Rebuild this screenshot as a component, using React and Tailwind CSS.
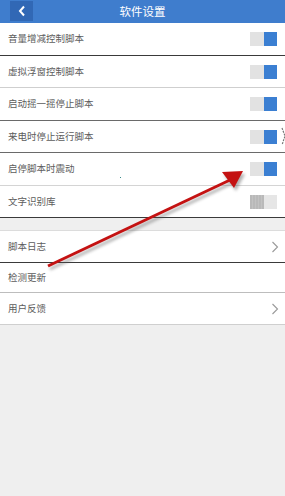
import React from "react";

const Toggle = ({ on }) =>
  on ? (
    <div className="flex h-[14px] w-[27px]">
      <div className="h-full w-[14px] bg-[#e2e2e2]" />
      <div className="h-full w-[13px] bg-[#3b7fd2]" />
    </div>
  ) : (
    <div className="flex h-[14px] w-[27px]">
      <div className="h-full w-[14px] bg-[repeating-linear-gradient(90deg,#b9b9b9_0px,#b9b9b9_2px,#c2c2c2_2px,#c2c2c2_3px)]" />
      <div className="h-full w-[13px] bg-[#e6e6e6]" />
    </div>
  );

const Chevron = () => (
  <svg width="8" height="12" viewBox="0 0 8 12" className="mr-[6px]">
    <path d="M1.5 1 L6.5 6 L1.5 11" fill="none" stroke="#9a9a9a" strokeWidth="1.1" />
  </svg>
);

const rows1 = [
  { t: "音量增减控制脚本", h: "h-[32px]", b: "border-[#3a3a3a]", on: true },
  { t: "虚拟浮窗控制脚本", h: "h-[31px]", b: "border-[#cfcfcf]", on: true },
  { t: "启动摇一摇停止脚本", h: "h-[32px]", b: "border-[#6a6a6a]", on: true },
  { t: "来电时停止运行脚本", h: "h-[31px]", b: "border-[#6a6a6a]", on: true },
  { t: "启停脚本时震动", h: "h-[32px]", b: "border-[#d4d4d4]", on: true },
  { t: "文字识别库", h: "h-[31px]", b: "border-[#3a3a3a]", on: false },
];

const rows2 = [
  { t: "脚本日志", h: "h-[31px]", b: "border-[#3a3a3a]", c: true },
  { t: "检测更新", h: "h-[29px]", b: "border-[#bdbdbd]", c: false },
  { t: "用户反馈", h: "h-[31px]", b: "border-[#cfcfcf]", c: true },
];

export default function App() {
  return (
    <div
      className="relative h-[496px] w-[285px] overflow-hidden bg-[#efefef]"
      style={{ fontFamily: '"Noto Sans CJK SC", "Noto Sans", sans-serif' }}
    >
      <div className="relative flex h-[23px] items-center justify-center bg-[#3f7dcd]">
        <div className="absolute left-[10px] top-[1px] flex h-[20px] w-[23px] items-center justify-center bg-[#3168b5]">
          <svg width="8" height="12" viewBox="0 0 8 12">
            <path d="M6 1.5 L2 6 L6 10.5" fill="none" stroke="#ffffff" strokeWidth="2" />
          </svg>
        </div>
        <span className="text-[11.5px] leading-none text-white">软件设置</span>
      </div>

      <div className="bg-white">
        {rows1.map((r, i) => (
          <div
            key={i}
            className={`flex ${r.h} box-content items-center justify-between border-b ${r.b} pl-[8px] pr-[8px]`}
          >
            <span className="text-[9.5px] leading-none text-[#5c5c5c]">{r.t}</span>
            <Toggle on={r.on} />
          </div>
        ))}
      </div>

      <div className="h-[12px]" />

      <div className="border-t border-[#dcdcdc] bg-white">
        {rows2.map((r, i) => (
          <div
            key={i}
            className={`flex ${r.h} box-content items-center justify-between border-b ${r.b} pl-[8px]`}
          >
            <span className="text-[9.5px] leading-none text-[#5c5c5c]">{r.t}</span>
            {r.c ? <Chevron /> : null}
          </div>
        ))}
      </div>

      <svg
        className="pointer-events-none absolute left-0 top-0"
        width="285"
        height="496"
        viewBox="0 0 285 496"
      >
        <defs>
          <filter id="sh" x="-20%" y="-20%" width="140%" height="140%">
            <feGaussianBlur stdDeviation="1.5" />
          </filter>
        </defs>
        <g opacity="0.45" filter="url(#sh)" transform="translate(2,3)">
          <line x1="48" y1="266" x2="230" y2="180" stroke="#555" strokeWidth="3" />
          <polygon points="243,171 222,172 234,188" fill="#555" />
        </g>
        <line x1="48" y1="266" x2="230" y2="180" stroke="#c41212" strokeWidth="3" />
        <polygon points="243,171 222,172 234,188" fill="#c41212" />
        <rect x="120" y="177" width="1" height="1" fill="#3a8a8a" />
        <path d="M282 128 L285 136 L282 145" fill="none" stroke="#777" strokeWidth="1.2" strokeDasharray="2 1" />
      </svg>
    </div>
  );
}
